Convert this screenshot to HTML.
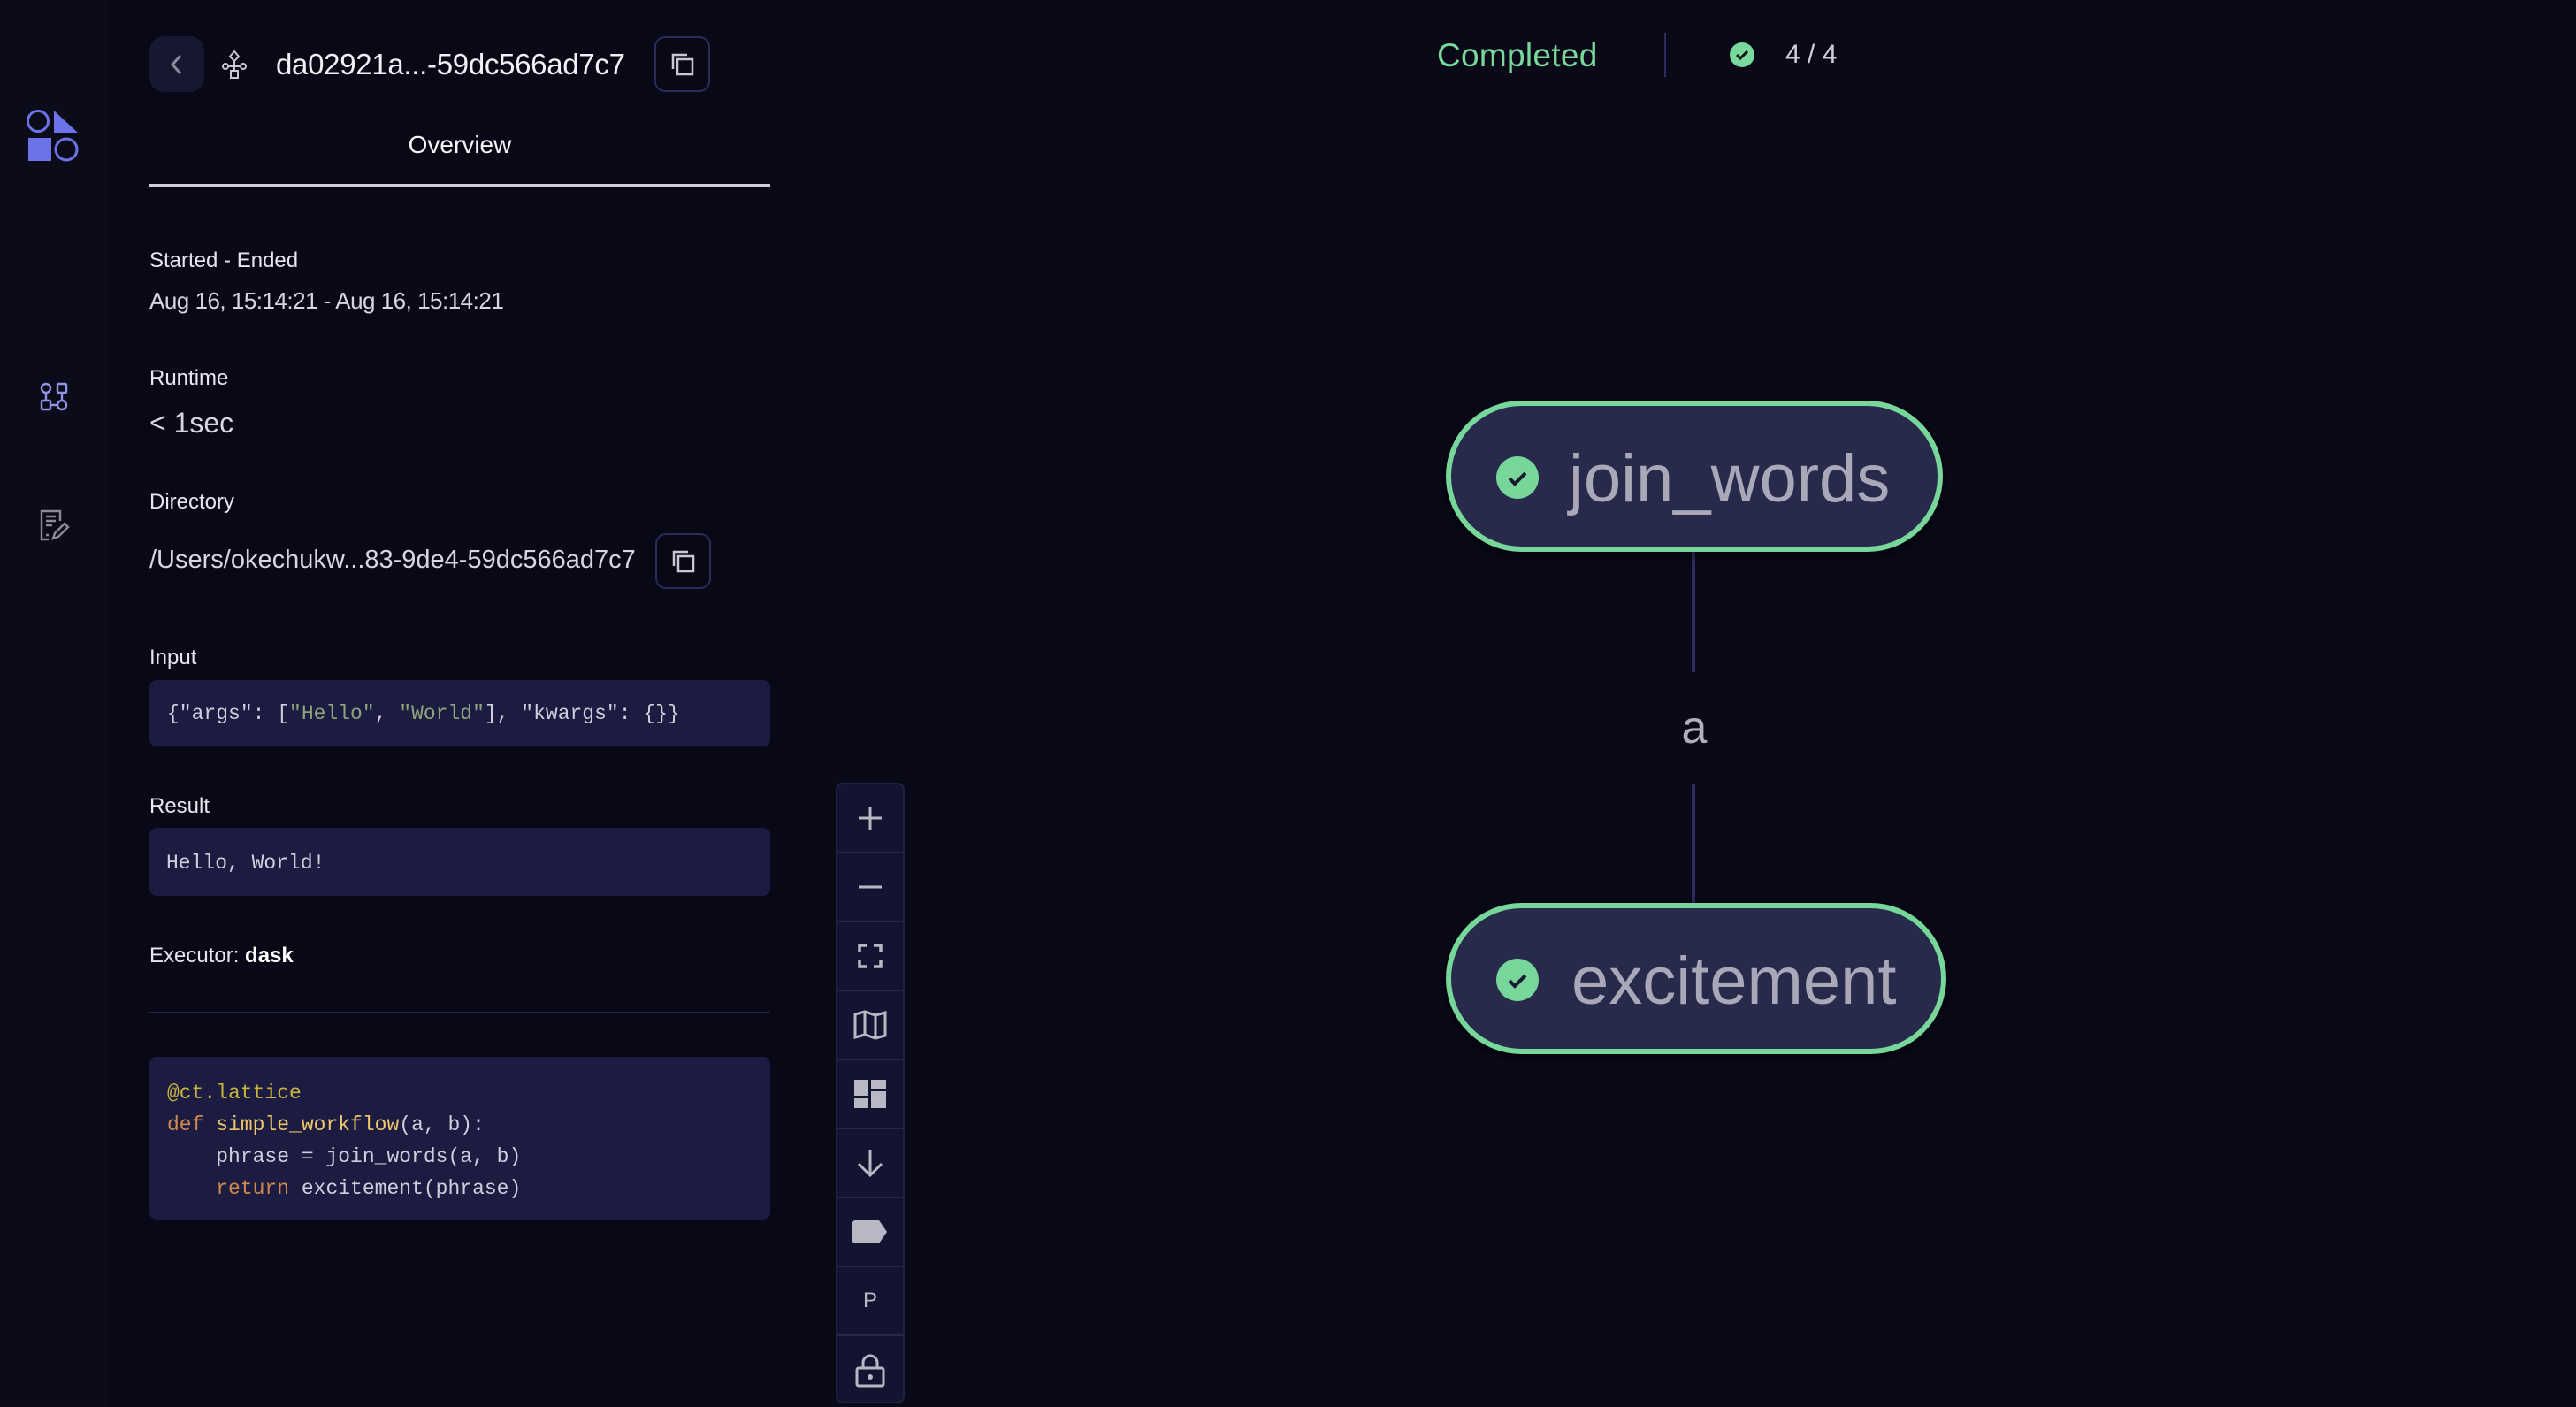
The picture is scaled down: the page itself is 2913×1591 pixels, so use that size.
<!DOCTYPE html>
<html><head><meta charset="utf-8"><style>
*{margin:0;padding:0;box-sizing:border-box}
body{width:2913px;height:1591px;background:#090918;font-family:"Liberation Sans",sans-serif;position:relative;overflow:hidden;color:#e8e8f0}
.a{position:absolute}
.nav{left:0;top:0;width:121px;height:1591px;background:#0b0b19;border-right:1px solid #0e0e1e}
.panel{left:121px;top:0;width:800px;height:1591px;background:#080816}
.lbl{font-size:24px;color:#e6e6ee;left:169px}
.val{font-size:28px;color:#d6d6e0;left:169px}
.box{left:169px;width:702px;background:#1c1c42;border-radius:8px;font-family:"Liberation Mono",monospace;font-size:23px;color:#cfcfdc}
.btn{border:2px solid #2b2b5c;border-radius:12px;width:63px;height:63px}
.ctl{left:945px;top:885px;width:78px;height:702px;border:2px solid #22223f;border-radius:8px;background:#141432}
.ctl div{height:78px;border-bottom:2px solid #27274a;display:flex;align-items:center;justify-content:center;color:#b8b8c4}
.ctl div:last-child{border-bottom:none}
.node{left:1635px;width:562px;height:171px;border:6px solid #77d79b;border-radius:86px;background:#282a4c;box-shadow:0 4px 14px rgba(0,0,0,.5)}
.node .ck{position:absolute;left:51px;top:57px;width:48px;height:48px;border-radius:50%;background:#77d79b}
.node span{position:absolute;left:133px;top:39px;font-size:76px;color:#a8a8b8}
.edge{left:1913px;width:4px;background:#2c2c62}
</style></head><body>
<div class="a nav"></div>
<div class="a panel"></div>

<svg class="a" style="left:30px;top:124px" width="60" height="60" viewBox="0 0 60 60">
<circle cx="13" cy="13" r="11.5" fill="none" stroke="#6c73e6" stroke-width="3"/>
<polygon points="31,1 31,26 58,26" fill="#6c73e6"/>
<rect x="2" y="32" width="26" height="26" fill="#6c73e6"/>
<circle cx="45" cy="45" r="12" fill="none" stroke="#6c73e6" stroke-width="3"/>
</svg>
<svg class="a" style="left:44px;top:432px" width="34" height="34" viewBox="0 0 34 34" fill="none" stroke="#8e95e8" stroke-width="2.4">
<circle cx="8" cy="7" r="5"/><rect x="21" y="2" width="10" height="10" rx="1"/>
<rect x="3" y="21" width="10" height="10" rx="1"/><circle cx="26" cy="26" r="5"/>
<path d="M8 12v9M26 12v9M13 26h8"/></svg>
<svg class="a" style="left:44px;top:575px" width="36" height="38" viewBox="0 0 36 38" fill="none" stroke="#8a8a9a" stroke-width="2.4">
<path d="M24 14V3H3v32h8"/><path d="M8 9h11M8 14h11M8 19h7M8 30h3"/><path d="M16 34l2-6 11-11 4 4-11 11z"/></svg>

<div class="a" style="left:169px;top:41px;width:62px;height:63px;border-radius:16px;background:#171731"></div>
<svg class="a" style="left:189px;top:60px" width="22" height="26" viewBox="0 0 22 26"><path d="M15 3L6 13l9 10" fill="none" stroke="#8a8a9a" stroke-width="3"/></svg>
<svg class="a" style="left:250px;top:56px" width="30" height="34" viewBox="0 0 30 34" fill="none" stroke="#c8c8d4" stroke-width="2">
<path d="M15 2l5 6-5 5-5-5z"/><circle cx="5" cy="19" r="3"/><circle cx="25" cy="19" r="3"/><rect x="11" y="24" width="8" height="8"/><path d="M15 13v11M8 19h14"/></svg>
<div class="a" style="left:312px;top:54px;font-size:33px;letter-spacing:-0.3px;color:#f0f0f5">da02921a...-59dc566ad7c7</div>
<div class="a btn" style="left:740px;top:41px"></div>
<svg class="a" style="left:757px;top:58px" width="30" height="30" viewBox="0 0 30 30" fill="none" stroke="#c8c8d4" stroke-width="2.5"><path d="M4 20V4h16"/><rect x="9" y="9" width="17" height="17"/></svg>

<div class="a" style="left:169px;top:148px;width:702px;text-align:center;font-size:28px;color:#f4f4f8">Overview</div>
<div class="a" style="left:169px;top:208px;width:702px;height:3px;background:#d0d0da"></div>

<div class="a lbl" style="top:281px">Started - Ended</div>
<div class="a val" style="top:325px;font-size:26px;letter-spacing:-0.5px">Aug 16, 15:14:21 - Aug 16, 15:14:21</div>
<div class="a lbl" style="top:414px">Runtime</div>
<div class="a val" style="top:460px;font-size:32px">&lt; 1sec</div>
<div class="a lbl" style="top:554px">Directory</div>
<div class="a val" style="top:617px;font-size:29px">/Users/okechukw...83-9de4-59dc566ad7c7</div>
<div class="a btn" style="left:741px;top:603px"></div>
<svg class="a" style="left:758px;top:620px" width="30" height="30" viewBox="0 0 30 30" fill="none" stroke="#c8c8d4" stroke-width="2.5"><path d="M4 20V4h16"/><rect x="9" y="9" width="17" height="17"/></svg>

<div class="a lbl" style="top:730px">Input</div>
<div class="a box" style="top:769px;height:75px;padding:25px 0 0 20px">{"args": [<span style="color:#8fa47a">"Hello"</span>, <span style="color:#8fa47a">"World"</span>], "kwargs": {}}</div>
<div class="a lbl" style="top:898px">Result</div>
<div class="a box" style="top:936px;height:77px;padding:27px 0 0 19px">Hello, World!</div>
<div class="a lbl" style="top:1067px">Executor: <b style="color:#fff">dask</b></div>
<div class="a" style="left:169px;top:1144px;width:702px;height:2px;background:#24243a"></div>
<div class="a box" style="top:1195px;height:184px;padding:23px 0 0 20px;line-height:36px">
<span style="color:#c9b43c">@ct.lattice</span><br>
<span style="color:#d0894a">def</span> <span style="color:#eec56a">simple_workflow</span>(a, b):<br>
&nbsp;&nbsp;&nbsp;&nbsp;phrase = join_words(a, b)<br>
&nbsp;&nbsp;&nbsp;&nbsp;<span style="color:#d0894a">return</span> excitement(phrase)</div>

<div class="a ctl">
<div><svg width="30" height="30"><path d="M15 2v26M2 15h26" stroke="#b8b8c4" stroke-width="3"/></svg></div>
<div><svg width="30" height="30"><path d="M2 15h26" stroke="#b8b8c4" stroke-width="3"/></svg></div>
<div><svg width="30" height="30" fill="none" stroke="#b8b8c4" stroke-width="3.5"><path d="M3 11V3h8M19 3h8v8M27 19v8h-8M11 27H3v-8"/></svg></div>
<div><svg width="38" height="34" fill="none" stroke="#b8b8c4" stroke-width="3"><path d="M2 5l11-3 12 4 11-3v26l-11 3-12-4-11 3z M13 2v26M25 6v26"/></svg></div>
<div><svg width="36" height="32" fill="#b8b8c4"><rect x="0" y="0" width="16" height="18"/><rect x="19" y="0" width="17" height="10"/><rect x="0" y="21" width="16" height="11"/><rect x="19" y="13" width="17" height="19"/></svg></div>
<div><svg width="34" height="34" fill="none" stroke="#b8b8c4" stroke-width="3"><path d="M17 2v29M4 18l13 13 13-13"/></svg></div>
<div><svg width="40" height="26"><path d="M3 0h27l9 13-9 13H3a3 3 0 0 1-3-3V3a3 3 0 0 1 3-3z" fill="#b8b8c4"/></svg></div>
<div style="font-size:24px">P</div>
<div><svg width="34" height="38" fill="none" stroke="#b8b8c4" stroke-width="3"><path d="M9 16V10a8 8 0 0 1 16 0v6"/><rect x="2" y="16" width="30" height="20" rx="2"/><circle cx="17" cy="26" r="3" fill="#b8b8c4" stroke="none"/></svg></div>
</div>

<div class="a" style="left:1625px;top:42px;font-size:37px;letter-spacing:0.3px;color:#79d89b">Completed</div>
<div class="a" style="left:1882px;top:37px;width:2px;height:50px;background:#2c2c60"></div>
<svg class="a" style="left:1956px;top:48px" width="28" height="28" viewBox="0 0 28 28"><circle cx="14" cy="14" r="14" fill="#79d89b"/><path d="M8 14l4 4 8-8" fill="none" stroke="#111" stroke-width="3"/></svg>
<div class="a" style="left:2019px;top:45px;font-size:30px;color:#cfcfd8">4 / 4</div>

<div class="a edge" style="top:624px;height:136px"></div>
<div class="a" style="left:1890px;top:793px;width:52px;text-align:center;font-size:52px;color:#b0b0bc">a</div>
<div class="a edge" style="top:886px;height:138px"></div>
<div class="a node" style="top:453px"><div class="ck"><svg width="48" height="48"><path d="M15 25l6 6 12-12" fill="none" stroke="#1a1a30" stroke-width="4"/></svg></div><span>join_words</span></div>
<div class="a node" style="top:1021px;width:566px"><div class="ck"><svg width="48" height="48"><path d="M15 25l6 6 12-12" fill="none" stroke="#1a1a30" stroke-width="4"/></svg></div><span style="left:136px">excitement</span></div>
</body></html>
